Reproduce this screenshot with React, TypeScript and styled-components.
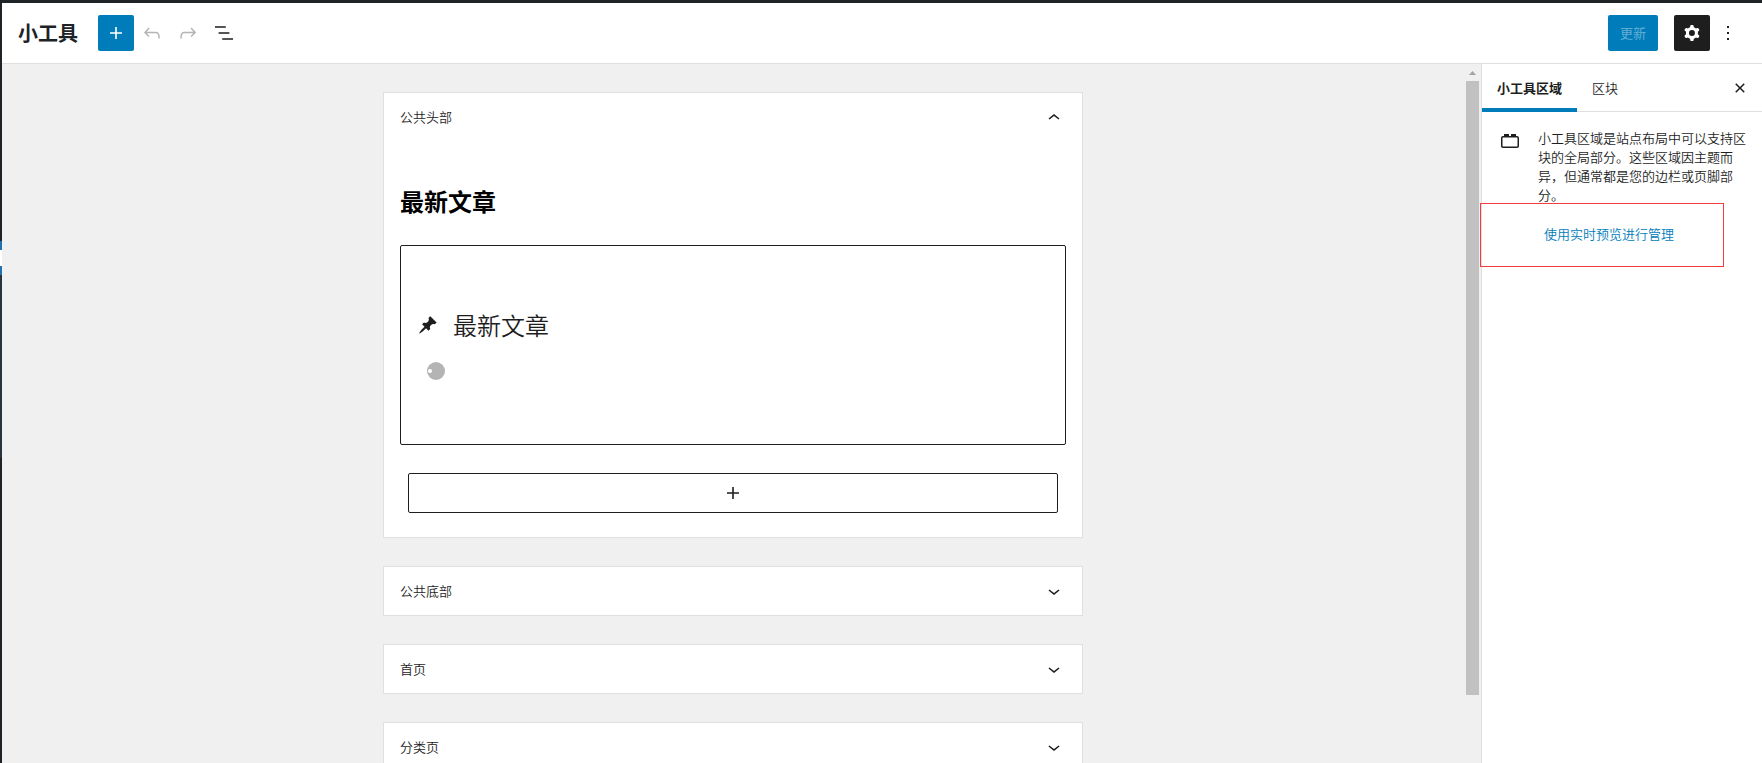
import React from "react";
import styled, { createGlobalStyle } from "styled-components";

const color = {
  ink: "#1e1e1e",
  admin: "#1d2327",
  adminSub: "#2c3338",
  adminActive: "#2271b1",
  accent: "#007cba",
  line: "#e0e0e0",
  canvas: "#f0f0f0",
};

const GlobalStyle = createGlobalStyle`
  *, *::before, *::after { box-sizing: border-box; }
  body {
    margin: 0;
    overflow: hidden;
    background: ${color.canvas};
    color: ${color.ink};
    font-family: "Noto Sans CJK SC", "Noto Sans", sans-serif;
    font-size: 13px;
    line-height: 19px;
  }
  button { font: inherit; color: inherit; cursor: pointer; }
  h1, h2, h3, p { margin: 0; }
`;

const Shell = styled.div`
  display: flex;
  height: 100vh;
  border-top: 3px solid ${color.admin};
`;

const AdminEdge = styled.div`
  display: flex;
  flex: none;
  flex-direction: column;
  width: 2px;
  background: ${color.admin};
`;

const EdgeSegment = styled.div<{ $height: number; $color: string }>`
  flex: none;
  height: ${(p) => p.$height}px;
  background: ${(p) => p.$color};
`;

const Editor = styled.div`
  display: flex;
  flex: 1;
  flex-direction: column;
  min-width: 0;
`;

const Header = styled.header`
  display: flex;
  flex: none;
  align-items: center;
  justify-content: space-between;
  height: 61px;
  padding: 0 16px;
  background: #fff;
  border-bottom: 1px solid ${color.line};
`;

const HeaderGroup = styled.div`
  display: flex;
  align-items: center;
`;

const PageTitle = styled.h1`
  margin-right: 20px;
  font-size: 20px;
  font-weight: 700;
  line-height: 28px;
  color: ${color.admin};
`;

const IconButton = styled.button<{ $bg?: string }>`
  display: flex;
  flex: none;
  align-items: center;
  justify-content: center;
  width: 36px;
  height: 36px;
  padding: 0;
  border: 0;
  border-radius: 2px;
  background: ${(p) => p.$bg ?? "transparent"};
  color: ${(p) => (p.$bg ? "#fff" : color.ink)};

  &:disabled {
    color: #b4b4b4;
    cursor: default;
  }
`;

const UpdateButton = styled.button`
  height: 36px;
  margin-right: 16px;
  padding: 0 12px 2px;
  border: 0;
  border-radius: 2px;
  background: ${color.accent};

  &:disabled {
    color: rgba(255, 255, 255, 0.4);
    cursor: default;
  }
`;

const Body = styled.div`
  display: flex;
  flex: 1;
  min-height: 0;
`;

const Canvas = styled.main`
  display: flex;
  flex: 1;
  flex-direction: column;
  gap: 28px;
  align-items: center;
  min-width: 0;
  overflow: hidden;
  padding: 28px 16px 0;
`;

const ScrollBar = styled.div`
  display: flex;
  flex: none;
  flex-direction: column;
  width: 17px;
  padding: 0 2px 17px;
`;

const ScrollArrow = styled.div`
  display: flex;
  flex: none;
  align-items: center;
  justify-content: center;
  height: 17px;
  color: #a3a3a3;
`;

const ScrollThumb = styled.div`
  height: 90%;
  background: #c1c1c1;
`;

const Card = styled.section`
  flex: none;
  width: 100%;
  max-width: 700px;
  padding: 0 16px;
  border: 1px solid ${color.line};
  background: #fff;
`;

const CardToggle = styled.button`
  display: flex;
  align-items: center;
  justify-content: space-between;
  width: 100%;
  height: 48px;
  padding: 0;
  border: 0;
  background: transparent;
  font-weight: 350;
`;

const AreaName = styled.span`
  padding-bottom: 2px;
`;

const CardBody = styled.div`
  display: flex;
  flex-direction: column;
  padding: 43px 0 24px;
`;

const BlockHeading = styled.h2`
  margin-bottom: 27px;
  font-size: 24px;
  font-weight: 700;
  line-height: 34px;
  color: #000;
`;

const Placeholder = styled.div`
  min-height: 200px;
  padding: 63px 15px;
  border: 1px solid ${color.ink};
  border-radius: 2px;
`;

const PlaceholderLabel = styled.div`
  display: flex;
  gap: 13px;
  align-items: center;
  font-size: 24px;
  font-weight: 350;
  line-height: 32px;
`;

const PinBox = styled.span`
  display: flex;
  justify-content: center;
  width: 24px;
`;

const Spinner = styled.div`
  display: flex;
  align-items: center;
  width: 18px;
  height: 18px;
  margin: 21px 11px 0;
  padding-left: 1px;
  border-radius: 50%;
  background: #b4b4b4;

  &::before {
    content: "";
    width: 4px;
    height: 4px;
    border-radius: 50%;
    background: #fff;
  }
`;

const Appender = styled.button`
  display: flex;
  align-items: center;
  justify-content: center;
  height: 40px;
  margin: 28px 8px 0;
  padding: 0;
  border: 1px solid ${color.ink};
  border-radius: 2px;
  background: #fff;
`;

const Sidebar = styled.aside`
  flex: none;
  width: 281px;
  border-left: 1px solid ${color.line};
  background: #fff;
`;

const Tabs = styled.div`
  display: flex;
  height: 48px;
  padding-right: 10px;
  box-shadow: inset 0 -1px 0 ${color.line};
`;

const Tab = styled.button<{ $active?: boolean }>`
  padding: 0 15px 2px;
  border: 0;
  background: transparent;
  font-weight: ${(p) => (p.$active ? 700 : 350)};
  box-shadow: ${(p) => (p.$active ? `inset 0 -4px 0 ${color.accent}` : "none")};
`;

const CloseButton = styled.button`
  display: flex;
  align-items: center;
  margin-left: auto;
  padding: 0;
  border: 0;
  background: transparent;
`;

const AreaInfo = styled.div`
  display: flex;
  gap: 16px;
  align-items: flex-start;
  padding: 16px;
  font-weight: 350;
`;

const ManageRow = styled.div`
  position: relative;
  display: flex;
  margin-top: 12px;
`;

const ManageLink = styled.a`
  padding: 0 6px;
  line-height: 36px;
  color: ${color.accent};
  text-decoration: none;
`;

const Highlight = styled.div`
  position: absolute;
  top: -13px;
  left: -58px;
  width: 244px;
  height: 64px;
  border: 1px solid #f53b3b;
  pointer-events: none;
`;

const Svg = styled.svg`
  display: block;
  flex: none;
  fill: currentColor;
`;

const paths = {
  plus: "M18 11.2h-5.2V6h-1.6v5.2H6v1.6h5.2V18h1.6v-5.2H18z",
  undo: "M18.3 11.7c-.6-.6-1.4-.9-2.3-.9H6.7l2.9-3.3-1.1-1-4.5 5L8.5 16l1-1-2.7-2.7H16c.5 0 .9.2 1.3.5 1 1 1 3.4 1 4.5v.3h1.5v-.2c0-1.5 0-4.3-1.5-5.7z",
  redo: "M15.6 6.5l-1.1 1 2.9 3.3H8c-.9 0-1.7.3-2.3.9-1.4 1.5-1.4 4.2-1.4 5.6v.2h1.5v-.3c0-1.1 0-3.5 1-4.5.3-.3.7-.5 1.3-.5h9.2L14.5 15l1.1 1.1 4.6-4.6-4.6-5z",
  list: "M13.8 5.2H3v1.5h10.8V5.2zm-3.6 12v1.5H21v-1.5H10.2zm7.2-6H6.6v1.5h10.8v-1.5z",
  cog: "M10.289 4.836A1 1 0 0111.275 4h1.306a1 1 0 01.987.836l.244 1.466c.787.26 1.503.679 2.108 1.218l1.393-.522a1 1 0 011.216.437l.653 1.13a1 1 0 01-.23 1.273l-1.148.944a6.025 6.025 0 010 2.435l1.149.946a1 1 0 01.23 1.272l-.653 1.13a1 1 0 01-1.216.437l-1.394-.522c-.605.54-1.32.958-2.108 1.218l-.244 1.466a1 1 0 01-.987.836h-1.306a1 1 0 01-.986-.836l-.244-1.466a5.995 5.995 0 01-2.108-1.218l-1.394.522a1 1 0 01-1.217-.436l-.653-1.131a1 1 0 01.23-1.272l1.149-.946a6.026 6.026 0 010-2.435l-1.148-.944a1 1 0 01-.23-1.272l.653-1.131a1 1 0 011.217-.437l1.393.522a5.994 5.994 0 012.108-1.218l.244-1.466zM14.929 12a3 3 0 11-6 0 3 3 0 016 0z",
  more: "M13 19h-2v-2h2v2zm0-6h-2v-2h2v2zm0-6h-2V5h2v2z",
  close: "M12 13.06l3.712 3.713 1.061-1.06L13.061 12l3.712-3.712-1.06-1.06L12 10.938 8.288 7.227l-1.061 1.06L10.939 12l-3.712 3.712 1.06 1.061L12 13.061z",
  down: "M17.5 11.6L12 16l-5.5-4.4.9-1.2L12 14l4.5-3.6 1 1.2z",
  up: "M6.5 13.4L12 9l5.5 4.4-.9 1.2L12 11l-4.5 3.6-1-1.2z",
  block: "M19 8h-1V6h-5v2h-2V6H6v2H5c-1.1 0-2 .9-2 2v8c0 1.1.9 2 2 2h14c1.1 0 2-.9 2-2v-8c0-1.1-.9-2-2-2zm.5 10c0 .3-.2.5-.5.5H5c-.3 0-.5-.2-.5-.5v-8c0-.3.2-.5.5-.5h14c.3 0 .5.2.5.5v8z",
};

function Icon({ name }: { name: keyof typeof paths }) {
  return (
    <Svg width="24" height="24" viewBox="0 0 24 24" aria-hidden="true">
      <path d={paths[name]} fillRule="evenodd" />
    </Svg>
  );
}

function PinIcon() {
  return (
    <Svg width="20" height="20" viewBox="0 0 20 20" aria-hidden="true">
      <path d="M10.44 3.02l1.82-1.82 6.36 6.35-1.83 1.82c-1.05-.68-2.48-.57-3.41.36l-.75.75c-.92.93-1.04 2.35-.35 3.41l-1.83 1.82-2.41-2.41-2.8 2.79c-.42.42-3.38 2.71-3.8 2.29s1.86-3.39 2.28-3.81l2.79-2.79L4.1 9.36l1.83-1.82c1.05.69 2.48.57 3.4-.36l.75-.75c.93-.92 1.05-2.35.36-3.41z" />
    </Svg>
  );
}

const closedAreas = ["公共底部", "首页", "分类页"];

export default function App() {
  return (
    <>
      <GlobalStyle />
      <Shell>
        <AdminEdge>
          <EdgeSegment $height={238} $color={color.admin} />
          <EdgeSegment $height={9} $color={color.adminActive} />
          <EdgeSegment $height={16} $color="#fff" />
          <EdgeSegment $height={9} $color={color.adminActive} />
          <EdgeSegment $height={183} $color={color.adminSub} />
        </AdminEdge>
        <Editor>
          <Header>
            <HeaderGroup>
              <PageTitle>小工具</PageTitle>
              <IconButton $bg={color.accent} aria-label="添加区块">
                <Icon name="plus" />
              </IconButton>
              <IconButton disabled aria-label="撤销">
                <Icon name="undo" />
              </IconButton>
              <IconButton disabled aria-label="重做">
                <Icon name="redo" />
              </IconButton>
              <IconButton aria-label="列表视图">
                <Icon name="list" />
              </IconButton>
            </HeaderGroup>
            <HeaderGroup>
              <UpdateButton disabled>更新</UpdateButton>
              <IconButton $bg={color.ink} aria-label="设置">
                <Icon name="cog" />
              </IconButton>
              <IconButton aria-label="选项">
                <Icon name="more" />
              </IconButton>
            </HeaderGroup>
          </Header>
          <Body>
            <Canvas>
              <Card>
                <CardToggle aria-expanded="true">
                  <AreaName>公共头部</AreaName>
                  <Icon name="up" />
                </CardToggle>
                <CardBody>
                  <BlockHeading>最新文章</BlockHeading>
                  <Placeholder>
                    <PlaceholderLabel>
                      <PinBox>
                        <PinIcon />
                      </PinBox>
                      最新文章
                    </PlaceholderLabel>
                    <Spinner />
                  </Placeholder>
                  <Appender aria-label="添加区块">
                    <Icon name="plus" />
                  </Appender>
                </CardBody>
              </Card>
              {closedAreas.map((name) => (
                <Card key={name}>
                  <CardToggle aria-expanded="false">
                    <AreaName>{name}</AreaName>
                    <Icon name="down" />
                  </CardToggle>
                </Card>
              ))}
            </Canvas>
            <ScrollBar>
              <ScrollArrow>
                <Svg width="7" height="4" viewBox="0 0 7 4" aria-hidden="true">
                  <path d="M3.5 0L7 4H0z" />
                </Svg>
              </ScrollArrow>
              <ScrollThumb />
            </ScrollBar>
            <Sidebar>
              <Tabs>
                <Tab $active>小工具区域</Tab>
                <Tab>区块</Tab>
                <CloseButton aria-label="关闭设置">
                  <Icon name="close" />
                </CloseButton>
              </Tabs>
              <AreaInfo>
                <Icon name="block" />
                <div>
                  <p>小工具区域是站点布局中可以支持区块的全局部分。这些区域因主题而异，但通常都是您的边栏或页脚部分。</p>
                  <ManageRow>
                    <ManageLink href="#customize">使用实时预览进行管理</ManageLink>
                    <Highlight />
                  </ManageRow>
                </div>
              </AreaInfo>
            </Sidebar>
          </Body>
        </Editor>
      </Shell>
    </>
  );
}
